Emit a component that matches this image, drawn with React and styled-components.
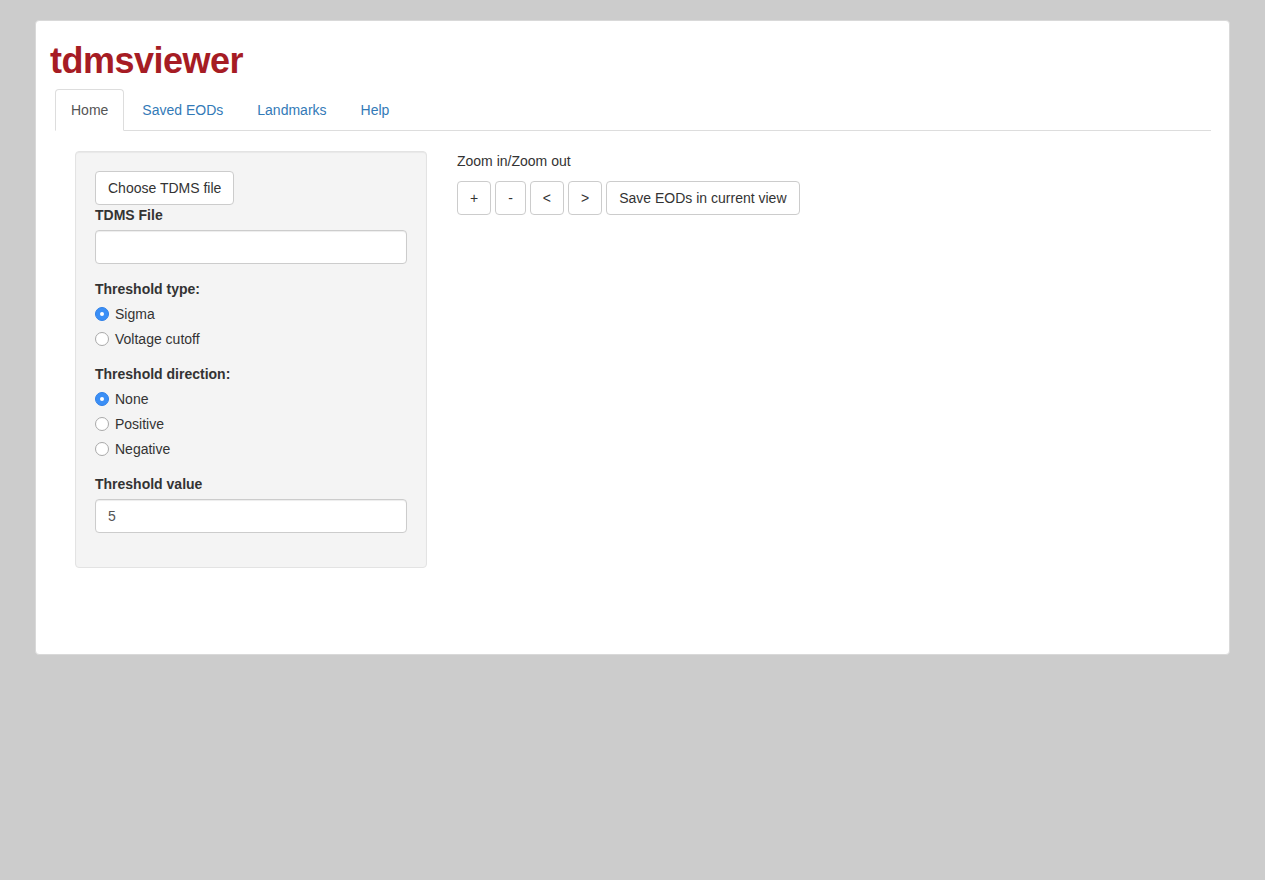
import React, { useState } from "react";
import styled, { createGlobalStyle } from "styled-components";

const GlobalStyle = createGlobalStyle`
  html, body {
    margin: 0;
    padding: 0;
    background: #cccccc;
    font-family: "Liberation Sans", Arial, sans-serif;
    font-size: 14px;
    line-height: 20px;
    color: #333;
  }
  * { box-sizing: border-box; }
`;

const Page = styled.div`
  padding: 20px 35px 0;
  min-height: 880px;
`;

const Container = styled.div`
  background: #fff;
  border: 1px solid #d9d9d9;
  border-radius: 4px;
  padding: 0 14px 86px;
`;

const Title = styled.h1`
  margin: 20px 0 8px;
  font-size: 36px;
  line-height: 39.6px;
  font-weight: 700;
  color: #a61c24;
  letter-spacing: -0.5px;
`;

const Tabs = styled.ul`
  display: flex;
  list-style: none;
  margin: 0 4px 0 5px;
  padding: 0;
  border-bottom: 1px solid #ddd;
`;

const Tab = styled.li`
  margin-right: 2px;
  margin-bottom: -1px;
  padding: 10px 15px;
  border: 1px solid ${p => (p.active ? "#ddd" : "transparent")};
  border-bottom-color: ${p => (p.active ? "#fff" : "transparent")};
  border-radius: 4px 4px 0 0;
  background: ${p => (p.active ? "#fff" : "transparent")};
  color: ${p => (p.active ? "#555" : "#337ab7")};
  cursor: pointer;
`;

const TabContent = styled.div`
  display: flex;
  gap: 30px;
  padding: 20px 0 0 25px;
`;

const Well = styled.div`
  width: 352px;
  flex: none;
  background: #f4f4f4;
  border: 1px solid #e3e3e3;
  border-radius: 4px;
  padding: 19px;
  box-shadow: inset 0 1px 1px rgba(0, 0, 0, 0.05);
`;

const Main = styled.div`
  flex: 1;
`;

const Button = styled.button`
  display: inline-block;
  height: 34px;
  padding: 6px 12px;
  font: inherit;
  line-height: 20px;
  color: #333;
  background: #fff;
  border: 1px solid #ccc;
  border-radius: 4px;
  cursor: pointer;
`;

const FormGroup = styled.div`
  margin-bottom: 15px;
`;

const Label = styled.label`
  display: block;
  font-weight: 700;
  margin-bottom: 5px;
`;

const Input = styled.input`
  display: block;
  width: 100%;
  height: 34px;
  padding: 6px 12px;
  font: inherit;
  color: #555;
  background: #fff;
  border: 1px solid #ccc;
  border-radius: 4px;
  box-shadow: inset 0 1px 1px rgba(0, 0, 0, 0.075);
  outline: none;
`;

const Options = styled.div`
  display: flex;
  flex-direction: column;
  gap: 5px;
`;

const RadioRow = styled.label`
  display: flex;
  align-items: center;
  gap: 6px;
  height: 20px;
  cursor: pointer;
`;

const RadioDot = styled.span`
  width: 14px;
  height: 14px;
  border-radius: 50%;
  flex: none;
  display: flex;
  align-items: center;
  justify-content: center;
  background: ${p => (p.checked ? "#3b8ff6" : "#fff")};
  border: 1px solid ${p => (p.checked ? "#2f80e8" : "#a9a9a9")};
  &::after {
    content: "";
    width: 4px;
    height: 4px;
    border-radius: 50%;
    background: ${p => (p.checked ? "#fff" : "transparent")};
  }
`;

const Caption = styled.p`
  margin: 0 0 10px;
`;

const ButtonRow = styled.div`
  display: flex;
  gap: 4px;
`;

function RadioGroup({ label, options, value, onChange }) {
  return (
    <FormGroup>
      <Label>{label}</Label>
      <Options>
        {options.map(o => (
          <RadioRow key={o} onClick={() => onChange(o)}>
            <RadioDot checked={value === o} />
            {o}
          </RadioRow>
        ))}
      </Options>
    </FormGroup>
  );
}

export default function App() {
  const [tab, setTab] = useState("Home");
  const [type, setType] = useState("Sigma");
  const [dir, setDir] = useState("None");
  const [val, setVal] = useState("5");

  return (
    <Page>
      <GlobalStyle />
      <Container>
        <Title>tdmsviewer</Title>
        <Tabs>
          {["Home", "Saved EODs", "Landmarks", "Help"].map(t => (
            <Tab key={t} active={tab === t} onClick={() => setTab(t)}>
              {t}
            </Tab>
          ))}
        </Tabs>
        <TabContent>
          <Well>
            <Button>Choose TDMS file</Button>
            <FormGroup>
              <Label>TDMS File</Label>
              <Input type="text" />
            </FormGroup>
            <RadioGroup
              label="Threshold type:"
              options={["Sigma", "Voltage cutoff"]}
              value={type}
              onChange={setType}
            />
            <RadioGroup
              label="Threshold direction:"
              options={["None", "Positive", "Negative"]}
              value={dir}
              onChange={setDir}
            />
            <FormGroup>
              <Label>Threshold value</Label>
              <Input type="text" value={val} onChange={e => setVal(e.target.value)} />
            </FormGroup>
          </Well>
          <Main>
            <Caption>Zoom in/Zoom out</Caption>
            <ButtonRow>
              <Button>+</Button>
              <Button>-</Button>
              <Button>&lt;</Button>
              <Button>&gt;</Button>
              <Button>Save EODs in current view</Button>
            </ButtonRow>
          </Main>
        </TabContent>
      </Container>
    </Page>
  );
}
